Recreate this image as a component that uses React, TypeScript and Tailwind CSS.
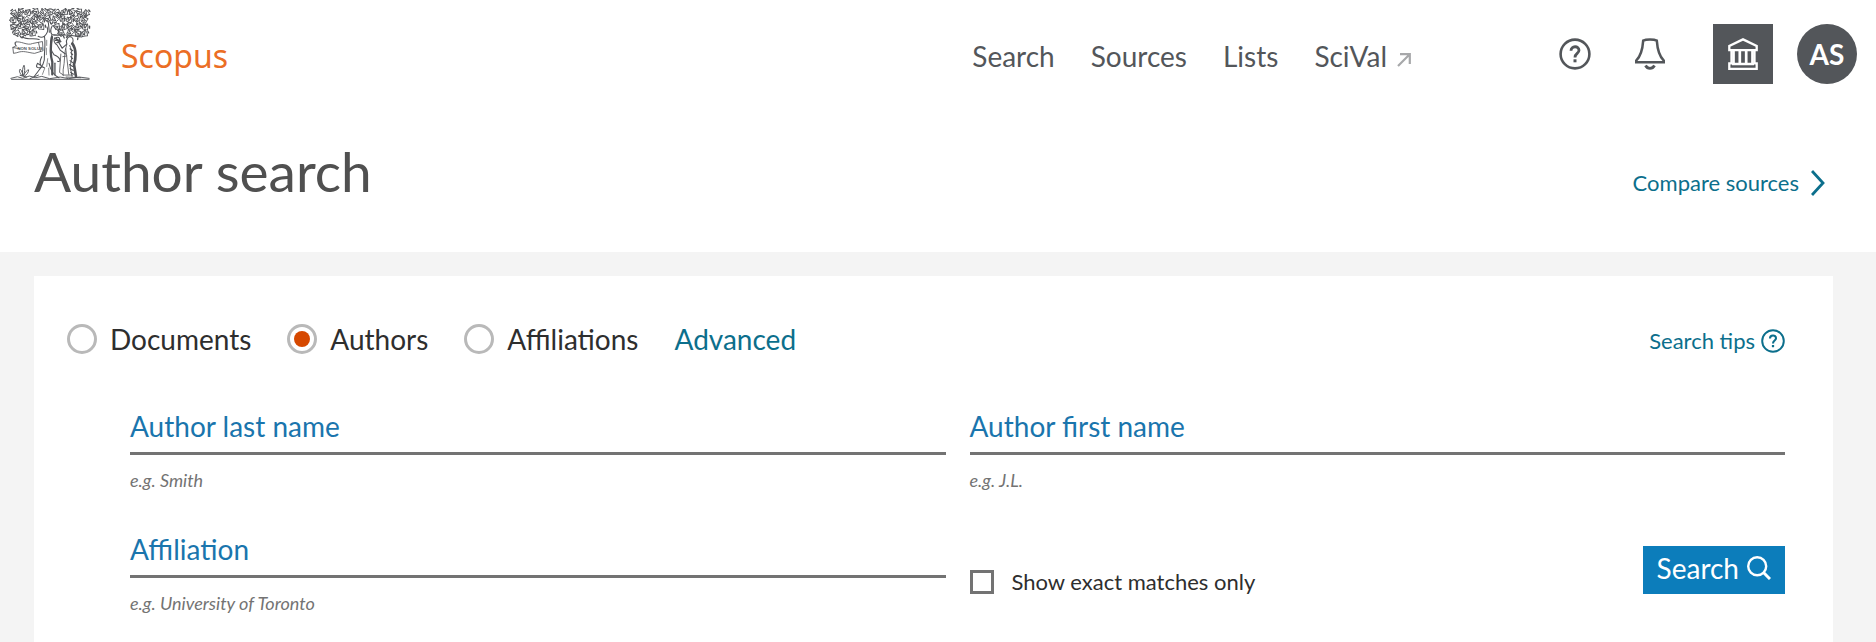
import { useState } from 'react'

const NAV = ['Search', 'Sources', 'Lists']
const MODES = ['Documents', 'Authors', 'Affiliations']

// x, y, rotation of every leaf in the crown of the tree
const LEAVES: [number, number, number][] = [
  [42, 38, 20], [62, 34, 80], [84, 36, 150], [108, 33, 30], [130, 35, 100], [152, 33, 60], [174, 36, 10], [196, 34, 130], [218, 35, 70], [240, 34, 40], [261, 38, 110],
  [40, 58, 140], [60, 55, 40], [81, 58, 0], [103, 54, 110], [123, 57, 170], [144, 54, 20], [166, 57, 90], [188, 54, 45], [210, 58, 160], [232, 55, 15], [256, 58, 75],
  [40, 80, 60], [61, 76, 120], [83, 80, 30], [105, 76, 80], [125, 79, 140], [172, 78, 35], [194, 80, 115], [215, 77, 5], [237, 79, 95], [259, 80, 150],
  [52, 99, 10], [74, 96, 75], [98, 99, 130], [185, 98, 20], [212, 97, 90], [236, 100, 55], [256, 100, 125],
]

function TreeLogo() {
  return (
    <svg viewBox="28 22 246 219" className="h-18 w-[82px] shrink-0 text-[#505256]" fill="none" stroke="currentColor" strokeWidth="3.2" strokeLinecap="round" role="img" aria-label="Elsevier">
      {LEAVES.map(([x, y, r]) => (
        <g key={`${x}-${y}`} transform={`translate(${x} ${y}) rotate(${r})`}>
          <path d="M-10 5C-9-1-6-7 0-11C3-6 8-4 11 1C7 3 5 7 3 10C-1 7-5 6-10 5Z" strokeWidth="2.8" />
          <path d="M-7 3L3-2M0 7L4 1" strokeWidth="3.2" />
          <path d="M10 7L14 11M-12-4L-9-9" strokeWidth="4" />
        </g>
      ))}
      {/* branches and trunk */}
      <path d="M142 80C146 90 144 99 134 108M158 76C152 86 152 96 157 103M146 66L149 96M115 108C122 112 128 112 134 108M157 103C174 107 192 102 212 105L248 110M66 110C85 120 105 112 118 118" />
      <path d="M134 108C138 130 134 150 134 168C137 194 118 208 102 232M156 106C150 130 153 152 163 164C184 172 186 188 174 184M148 190C152 210 158 224 178 234" />
      <path d="M157 110C151 145 153 170 158 186V224" strokeWidth="7" />
      <path d="M166 190V226" strokeWidth="4" />
      <path d="M141 120V136M140 144V164M144 176L141 200M135 205L128 224M147 205L148 226" strokeWidth="2" />
      <path d="M126 170C116 190 122 202 134 204M112 192C106 203 115 206 124 202M113 190L120 195" />
      {/* figure under the tree */}
      <path d="M166 112C160 118 164 130 172 134L182 150L198 162M170 112C180 108 184 118 176 124L188 144L202 132C198 116 207 106 216 110C225 116 221 129 216 132" />
      <path d="M168 114L180 122M167 120H182M172 127L184 124" strokeWidth="4" />
      <path d="M202 132C193 158 197 184 191 210V228M199 146L208 224M190 170L202 168M184 162L180 218L192 226H220" strokeWidth="2.5" />
      <path d="M219 130C232 148 230 176 224 194L230 230" strokeWidth="8" />
      <path d="M211 136C220 154 218 178 212 198L218 230" strokeWidth="3" />
      <path d="M212 146L220 152M214 158L220 164M214 170L220 176M212 182L220 188M210 194L220 200M212 206L222 212M214 218L224 224" />
      {/* banner */}
      <path d="M46 126C60 120 82 138 98 130L128 124L130 152L104 160C84 158 70 150 50 158L40 160L38 142L46 138ZM38 142L58 146M116 127L122 154M48 124C42 128 44 136 50 138" strokeWidth="2.5" />
      <text x="52" y="151" fontSize="13" fontFamily="Liberation Sans" fontWeight="700" stroke="none" fill="currentColor">NON SOLUS</text>
      {/* ground */}
      <path d="M32 236L52 231L68 236L88 229L108 234L126 230L150 237L182 232L208 237L240 232L270 236M34 239H270M60 227L80 232M90 237L116 226M200 232L244 234" strokeWidth="2.8" />
      <path d="M66 228C58 220 56 212 60 208C66 214 68 220 68 228C66 214 68 202 72 196C76 206 74 218 70 228C76 216 82 210 86 210C86 218 80 226 72 230" strokeWidth="2.8" />
    </svg>
  )
}

function HelpIcon({ className }: { className: string }) {
  return (
    <svg viewBox="0 0 32 32" className={className} fill="none" stroke="currentColor" strokeWidth="2.6" aria-hidden="true">
      <circle cx="16" cy="16" r="14.4" />
      <path d="M12 12.8C12 7.6 20 7.4 20 12.3C20 15.6 16 15.3 16 19.4" strokeWidth="2.8" />
      <path d="M14.5 21.3H17.5V24.3H14.5Z" fill="currentColor" stroke="none" />
    </svg>
  )
}

function BellIcon() {
  return (
    <svg viewBox="0 0 30 32" className="h-8 w-[30px]" fill="none" stroke="currentColor" strokeWidth="2.5" aria-hidden="true">
      <path d="M8.2 2.6C11 1 19 1 21.8 2.6C22.4 11 24 18 28.8 22.6V24.3H1.2V22.6C6 18 7.6 11 8.2 2.6Z" />
      <path d="M10.5 27.5C12.6 31.3 17.4 31.3 19.5 27.5" strokeWidth="2.8" />
    </svg>
  )
}

function BankIcon() {
  return (
    <svg viewBox="0 0 30 32" className="h-8 w-[30px]" fill="none" stroke="currentColor" strokeWidth="2.3" aria-hidden="true">
      <path d="M1.3 12.2V8L15 1.4L28.7 8V12.2Z" />
      <path d="M5.5 12V25M11.8 12V25M18.2 12V25M24.5 12V25" strokeWidth="2.7" />
      <path d="M3.5 12V25.3H1.3V30.8H28.7V25.3H26.5V12M4 26H26" />
    </svg>
  )
}

function Field({ id, label, hint }: { id: string; label: string; hint: string }) {
  return (
    <div>
      <div className="grid">
        <input
          id={id}
          placeholder=" "
          className="peer col-start-1 row-start-1 h-12 w-full min-w-0 border-b-3 border-[#737373] bg-transparent text-[28px] text-[#2e2e2e] outline-none"
        />
        <label
          htmlFor={id}
          className="pointer-events-none col-start-1 row-start-1 text-[28px] leading-[38px] text-[#1a75ad] peer-[:not(:placeholder-shown)]:opacity-0"
        >
          {label}
        </label>
      </div>
      <p className="mt-[11px] text-[18px] leading-7 italic text-[#737373]">{hint}</p>
    </div>
  )
}

export default function App() {
  const [mode, setMode] = useState('Authors')
  const [exact, setExact] = useState(false)

  return (
    <div className="flex min-h-screen flex-col bg-white font-[Lato,'Noto_Sans',sans-serif] text-[#53565a]">
      {/* Header */}
      <header className="flex items-start justify-between pt-2 pr-[19px] pl-[9px]">
        <a href="#home" className="flex items-center gap-[30px] text-[#eb6e25]">
          <TreeLogo />
          <span className="mt-6 font-['Noto_Sans',sans-serif] text-[32px] leading-10">Scopus</span>
        </a>
        <div className="flex items-center pt-4">
          <nav className="mr-[148px] flex items-center gap-9 pt-1 text-[28px] leading-10">
            {NAV.map((item) => (
              <a key={item} href={`#${item.toLowerCase()}`}>{item}</a>
            ))}
            <a href="#scival" className="flex items-center gap-2.5">
              SciVal
              <svg viewBox="0 0 14 14" className="mt-2 h-3.5 w-3.5 text-[#a7a8aa]" fill="none" stroke="currentColor" strokeWidth="2.2" aria-hidden="true">
                <path d="M1 13L12.5 1.5M3 1.2H12.8V11" />
              </svg>
            </a>
          </nav>
          <button type="button" aria-label="Help" className="mr-11"><HelpIcon className="h-8 w-8" /></button>
          <button type="button" aria-label="Notifications" className="mr-12"><BellIcon /></button>
          <button type="button" aria-label="Institution" className="mr-6 flex h-15 w-15 items-center justify-center bg-[#53565a] text-white">
            <BankIcon />
          </button>
          <button type="button" className="h-15 w-15 rounded-full bg-[#53565a] text-[28px] font-bold text-white">AS</button>
        </div>
      </header>

      {/* Title row */}
      <div className="flex items-end justify-between px-[34px] pt-[55px] pb-[49px]">
        <h1 className="text-[55px] leading-16 text-[#505050]">Author search</h1>
        <a href="#compare" className="mr-[17px] flex items-center gap-3 text-[22px] leading-10 text-[#0c6f8c]">
          Compare sources
          <svg viewBox="0 0 14 26" className="h-[26px] w-3.5" fill="none" stroke="currentColor" strokeWidth="2.8" aria-hidden="true">
            <path d="M1 1L12 13L1 25" />
          </svg>
        </a>
      </div>

      <main className="flex flex-1 flex-col bg-[#f4f4f4] pt-6 pr-[43px] pl-[34px]">
        <form className="flex-1 bg-white pt-[43px] pr-12 pl-[33px]" onSubmit={(e) => e.preventDefault()}>
          {/* Search mode */}
          <div className="flex items-end justify-between">
            <div className="flex items-center gap-9 text-[28px] leading-10 text-[#2e2e2e]">
              {MODES.map((item) => (
                <label key={item} className="flex items-center gap-[13px]">
                  <input
                    type="radio"
                    name="mode"
                    checked={mode === item}
                    onChange={() => setMode(item)}
                    className="h-[30px] w-[30px] appearance-none rounded-full border-3 border-[#b9b9b9] bg-clip-content p-1 checked:bg-[#d64800]"
                  />
                  {item}
                </label>
              ))}
              <a href="#advanced" className="text-[#0c6f8c]">Advanced</a>
            </div>
            <a href="#tips" className="flex items-center gap-1.5 text-[22px] leading-9 text-[#0c6f8c]">
              Search tips
              <HelpIcon className="h-6 w-6" />
            </a>
          </div>

          <div className="mt-12 grid grid-cols-2 gap-x-6 gap-y-9 pl-[63px]">
            <Field id="last" label="Author last name" hint="e.g. Smith" />
            <Field id="first" label="Author first name" hint="e.g. J.L." />
            <Field id="affiliation" label="Affiliation" hint="e.g. University of Toronto" />
            <div className="flex items-start justify-between pt-4">
              <label className="flex items-center gap-[18px] pt-5 text-[22px] leading-8 text-[#2e2e2e]">
                <input
                  type="checkbox"
                  checked={exact}
                  onChange={(e) => setExact(e.target.checked)}
                  className="h-6 w-6 appearance-none border-3 border-[#737373] bg-clip-content p-0.5 checked:bg-[#d64800]"
                />
                Show exact matches only
              </label>
              <button type="submit" className="flex h-12 items-center gap-2 bg-[#0c7dbb] px-3.5 pb-1 text-[28px] text-white">
                Search
                <svg viewBox="0 0 24 24" className="h-6 w-6" fill="none" stroke="currentColor" strokeWidth="2.4" aria-hidden="true">
                  <circle cx="10.2" cy="10.2" r="9" />
                  <path d="M16.5 16.5L23 23" strokeWidth="3" />
                </svg>
              </button>
            </div>
          </div>
        </form>
      </main>
    </div>
  )
}
